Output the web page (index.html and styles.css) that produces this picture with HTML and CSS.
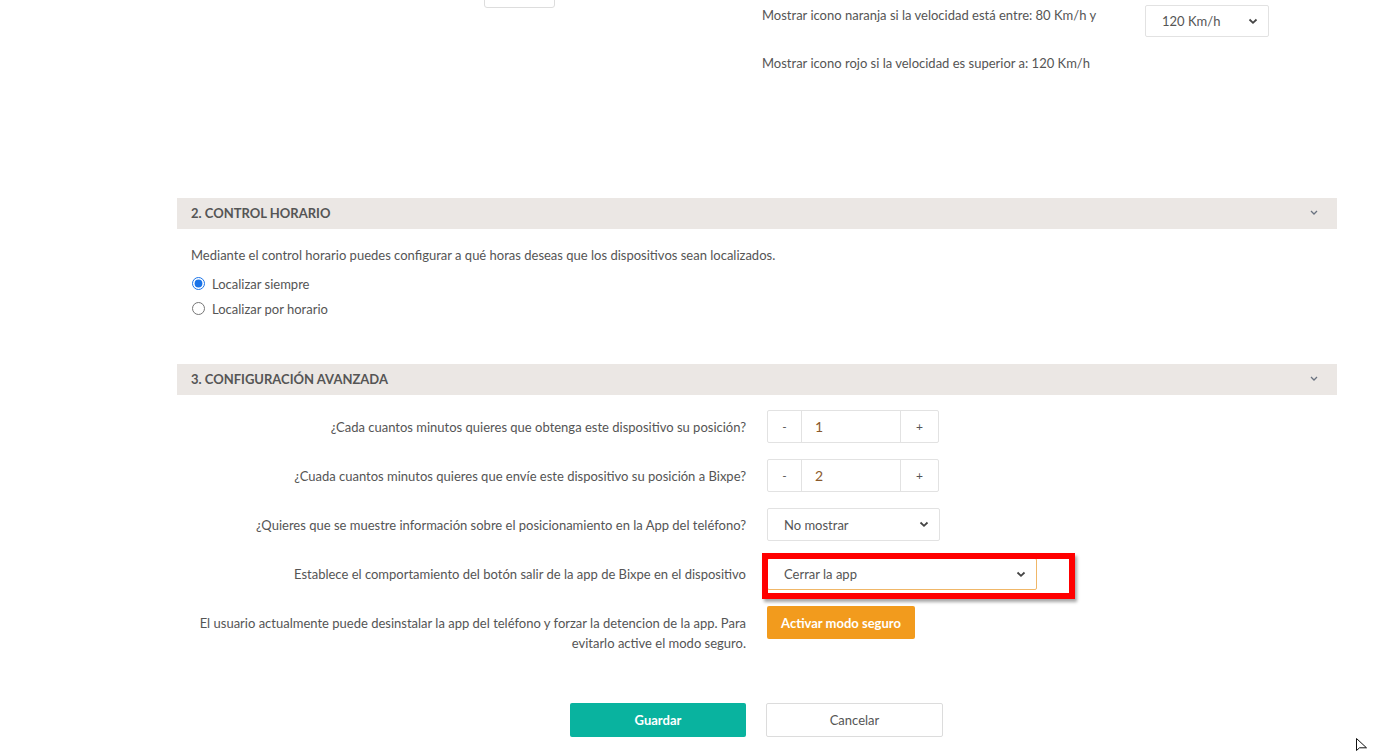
FILE: index.html
```html
<!DOCTYPE html>
<html lang="es">
<head>
<meta charset="utf-8">
<title>Configuración</title>
<link rel="stylesheet" href="styles.css">
</head>
<body>
<div class="page">
  <section class="top">
    <div class="top-left">
      <div class="stub-box"></div>
    </div>
    <div class="top-right">
      <div class="speed-row">
        <div class="speed-text">Mostrar icono naranja si la velocidad está entre: 80 Km/h y</div>
        <div class="speed-ctrl">
          <div class="select sel-speed"><span>120 Km/h</span>
            <svg class="chev" width="10" height="7" viewBox="0 0 10 7"><path d="M1.5 1.5 L5 4.8 L8.5 1.5" fill="none" stroke="#444" stroke-width="1.8"/></svg>
          </div>
        </div>
      </div>
      <div class="speed-text second">Mostrar icono rojo si la velocidad es superior a: 120 Km/h</div>
    </div>
  </section>

  <div class="panel-head">
    <span>2. CONTROL HORARIO</span>
    <svg class="head-chev" width="8" height="5" viewBox="0 0 8 5"><path d="M1 1 L4 4 L7 1" fill="none" stroke="#6a7380" stroke-width="1.3"/></svg>
  </div>
  <div class="panel-body horario">
    <p class="intro">Mediante el control horario puedes configurar a qué horas deseas que los dispositivos sean localizados.</p>
    <label class="radio"><input type="radio" name="loc" checked><span>Localizar siempre</span></label>
    <label class="radio"><input type="radio" name="loc"><span>Localizar por horario</span></label>
  </div>

  <div class="panel-head">
    <span>3. CONFIGURACIÓN AVANZADA</span>
    <svg class="head-chev" width="8" height="5" viewBox="0 0 8 5"><path d="M1 1 L4 4 L7 1" fill="none" stroke="#6a7380" stroke-width="1.3"/></svg>
  </div>
  <div class="panel-body advanced">
    <div class="form-row">
      <div class="label">¿Cada cuantos minutos quieres que obtenga este dispositivo su posición?</div>
      <div class="ctrl">
        <div class="spinner"><span class="sp-btn minus">-</span><span class="sp-val">1</span><span class="sp-btn plus">+</span></div>
      </div>
    </div>
    <div class="form-row">
      <div class="label">¿Cuada cuantos minutos quieres que envíe este dispositivo su posición a Bixpe?</div>
      <div class="ctrl">
        <div class="spinner"><span class="sp-btn minus">-</span><span class="sp-val">2</span><span class="sp-btn plus">+</span></div>
      </div>
    </div>
    <div class="form-row">
      <div class="label">¿Quieres que se muestre información sobre el posicionamiento en la App del teléfono?</div>
      <div class="ctrl">
        <div class="select sel-info"><span>No mostrar</span>
          <svg class="chev" width="10" height="7" viewBox="0 0 10 7"><path d="M1.5 1.5 L5 4.8 L8.5 1.5" fill="none" stroke="#444" stroke-width="1.8"/></svg>
        </div>
      </div>
    </div>
    <div class="form-row">
      <div class="label">Establece el comportamiento del botón salir de la app de Bixpe en el dispositivo</div>
      <div class="ctrl">
        <div class="highlight-wrap">
          <div class="select sel-exit"><span>Cerrar la app</span>
            <svg class="chev" width="10" height="7" viewBox="0 0 10 7"><path d="M1.5 1.5 L5 4.8 L8.5 1.5" fill="none" stroke="#444" stroke-width="1.8"/></svg>
          </div>
          <div class="red-box"></div>
        </div>
      </div>
    </div>
    <div class="form-row">
      <div class="label">El usuario actualmente puede desinstalar la app del teléfono y forzar la detencion de la app. Para evitarlo active el modo seguro.</div>
      <div class="ctrl">
        <button class="btn btn-orange">Activar modo seguro</button>
      </div>
    </div>
  </div>

  <div class="actions">
    <button class="btn btn-save">Guardar</button>
    <button class="btn btn-cancel">Cancelar</button>
  </div>
</div>
<svg class="cursor" width="13" height="16" viewBox="0 0 13 16"><path d="M1.5 1.5 L1.5 13.5 L4.5 10.8 L11.5 10.8 Z" fill="#fff" stroke="#111" stroke-width="1"/></svg>
</body>
</html>
```

FILE: styles.css
```css
* { box-sizing: border-box; }
html, body { margin: 0; padding: 0; background: #fff; }
body {
  font-family: Lato, "Open Sans", "Liberation Sans", sans-serif;
  font-size: 13px;
  color: #555;
  line-height: 20px;
  width: 1391px;
  height: 751px;
  overflow: hidden;
  position: relative;
}
.page {
  width: 1160px;
  margin-left: 177px;
}

/* top section */
.top {
  display: flex;
  height: 198px;
  padding-top: 5px;
}
.top-left { width: 580px; }
.stub-box {
  margin-top: -30px;
  margin-left: 307px;
  width: 71px;
  height: 33px;
  border: 1px solid #ddd;
  border-radius: 3px;
}
.top-right { width: 580px; padding-left: 5px; }
.speed-row { display: flex; height: 32px; }
.speed-text { width: 383px; }
.speed-text.second { margin-top: 16px; }
.select {
  display: flex;
  align-items: center;
  justify-content: space-between;
  height: 32px;
  border: 1px solid #e2e2e2;
  border-radius: 2px;
  background: #fff;
  color: #555;
}
.sel-speed { width: 124px; padding: 0 10px 0 16px; }

/* panel heads */
.panel-head {
  display: flex;
  align-items: center;
  justify-content: space-between;
  height: 31px;
  background: #ebe7e4;
  padding: 0 19px 0 14px;
  font-weight: bold;
  color: #555;
}
.head-chev { margin-top: -2px; }
.panel-head span { margin-top: -1px; }

.horario { padding: 16px 14px 0 14px; height: 135px; }
.intro { margin: 0 0 6px 0; }
.radio {
  display: flex;
  align-items: center;
  gap: 7px;
  height: 25px;
  padding-left: 1px;
}
.radio input {
  margin: 0;
  width: 13px;
  height: 13px;
  accent-color: #1a73e8;
}

/* advanced rows */
.advanced { padding-top: 15px; }
.form-row {
  display: flex;
  align-items: flex-start;
  margin-bottom: 16px;
}
.label {
  width: 580px;
  padding: 7px 11px 0 20px;
  text-align: right;
}
.ctrl { padding-left: 10px; flex: 1; }

.spinner {
  display: flex;
  width: 172px;
  height: 33px;
  border: 1px solid #e2e2e2;
  border-radius: 2px;
}
.sp-btn {
  display: flex;
  align-items: center;
  justify-content: center;
  color: #555;
  font-size: 12px;
}
.minus { width: 34px; border-right: 1px solid #e2e2e2; }
.plus { width: 38px; border-left: 1px solid #e2e2e2; }
.sp-val {
  flex: 1;
  display: flex;
  align-items: center;
  padding-left: 13px;
  color: #8a5a2b;
  font-size: 14px;
}
.sel-info { width: 173px; height: 33px; padding: 0 10px 0 16px; }

.highlight-wrap { position: relative; width: 270px; }
.sel-exit {
  width: 270px;
  height: 32px;
  margin-top: 1px;
  padding: 0 10px 0 16px;
  border-color: #f0b768;
}
.red-box {
  position: absolute;
  left: -5px;
  top: -5px;
  width: 313px;
  height: 46px;
  border: 6px solid #f00;
  box-shadow: 2px 3px 3px rgba(0,0,0,0.35);
  pointer-events: none;
}

.btn {
  font-family: Lato, "Open Sans", "Liberation Sans", sans-serif;
  font-size: 13px;
  border-radius: 2px;
  cursor: pointer;
}
.btn-orange {
  width: 148px;
  height: 33px;
  border: none;
  background: #f29b1d;
  color: #fff;
  font-weight: bold;
}

.actions {
  display: flex;
  justify-content: center;
  gap: 20px;
  margin-top: 50px;
  padding-right: 1px;
}
.btn-save {
  width: 176px;
  height: 34px;
  border: none;
  background: #09b39f;
  color: #fff;
  font-weight: bold;
}
.btn-cancel {
  width: 177px;
  height: 34px;
  background: #fff;
  border: 1px solid #dcdcdc;
  color: #555;
}

.cursor {
  position: absolute;
  left: 1355px;
  top: 737px;
}
```
